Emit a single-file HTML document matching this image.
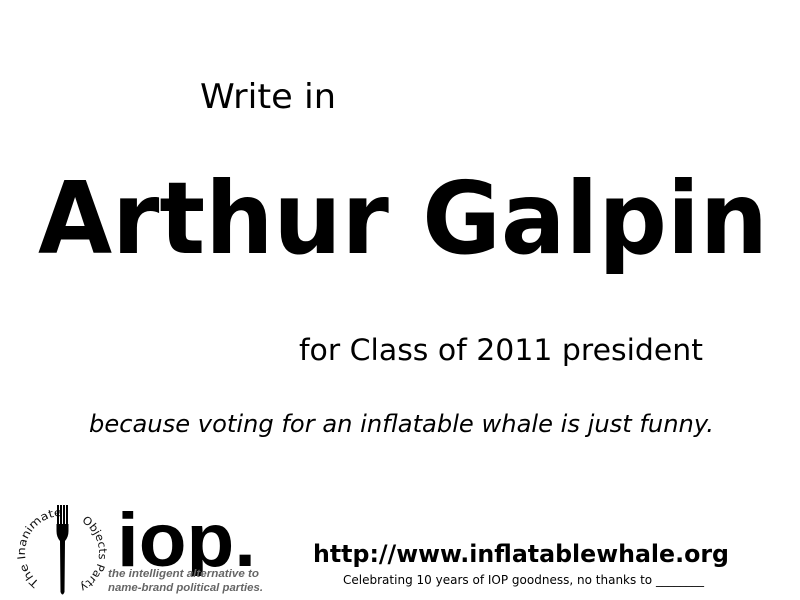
<!DOCTYPE html>
<html><head><meta charset="utf-8"><style>
html,body{margin:0;padding:0;background:#fff;width:800px;height:600px;overflow:hidden}
svg{display:block}
</style></head><body>
<svg width="800" height="600" viewBox="0 0 800 600" xmlns="http://www.w3.org/2000/svg">
<g font-family="DejaVu Sans, sans-serif" fill="#000">
<text x="200" y="108" font-size="34" textLength="136" lengthAdjust="spacingAndGlyphs">Write in</text>
<text x="38" y="253" font-size="100" font-weight="bold" textLength="730" lengthAdjust="spacingAndGlyphs">Arthur Galpin</text>
<text x="299" y="360" font-size="29" textLength="404" lengthAdjust="spacingAndGlyphs">for Class of 2011 president</text>
<text x="89" y="432" font-size="24" font-style="italic" textLength="625" lengthAdjust="spacingAndGlyphs">because voting for an inflatable whale is just funny.</text>
<text x="313" y="562" font-size="24" font-weight="bold" textLength="416" lengthAdjust="spacingAndGlyphs">http://www.inflatablewhale.org</text>
<text x="343" y="584" font-size="12" textLength="361" lengthAdjust="spacingAndGlyphs">Celebrating 10 years of IOP goodness, no thanks to ________</text>
</g>
<defs>
<path id="c" d="M62 590 A37 37 0 1 1 62.01 590"/>
<clipPath id="cl"><rect x="100" y="500" width="170" height="76"/></clipPath>
</defs>
<g font-family="DejaVu Sans, sans-serif" font-size="11" fill="#111">
<text><textPath href="#c" startOffset="24" textLength="92" lengthAdjust="spacingAndGlyphs">The Inanimate</textPath></text>
<text><textPath href="#c" startOffset="136" textLength="78" lengthAdjust="spacingAndGlyphs">Objects Party</textPath></text>
</g>
<g fill="#000">
<rect x="57" y="505" width="2" height="22"/>
<rect x="60" y="505" width="2" height="22"/>
<rect x="63" y="505" width="2" height="22"/>
<rect x="66" y="505" width="2" height="22"/>
<path d="M56.5 524 L68.5 524 L68.5 531 Q68.5 537 65 541 L64.5 592 Q62.5 597 60.5 592 L60 541 Q56.5 537 56.5 531 Z"/>
</g>
<text clip-path="url(#cl)" x="117" y="566" font-family="Liberation Sans, sans-serif" font-size="76" font-weight="bold" textLength="139" lengthAdjust="spacingAndGlyphs">iop.</text>
<g font-family="Liberation Sans, sans-serif" font-size="11" font-weight="bold" font-style="italic" fill="#666">
<text x="108" y="577" textLength="151" lengthAdjust="spacingAndGlyphs">the intelligent alternative to</text>
<text x="108" y="591" textLength="155" lengthAdjust="spacingAndGlyphs">name-brand political parties.</text>
</g>
</svg>
</body></html>
